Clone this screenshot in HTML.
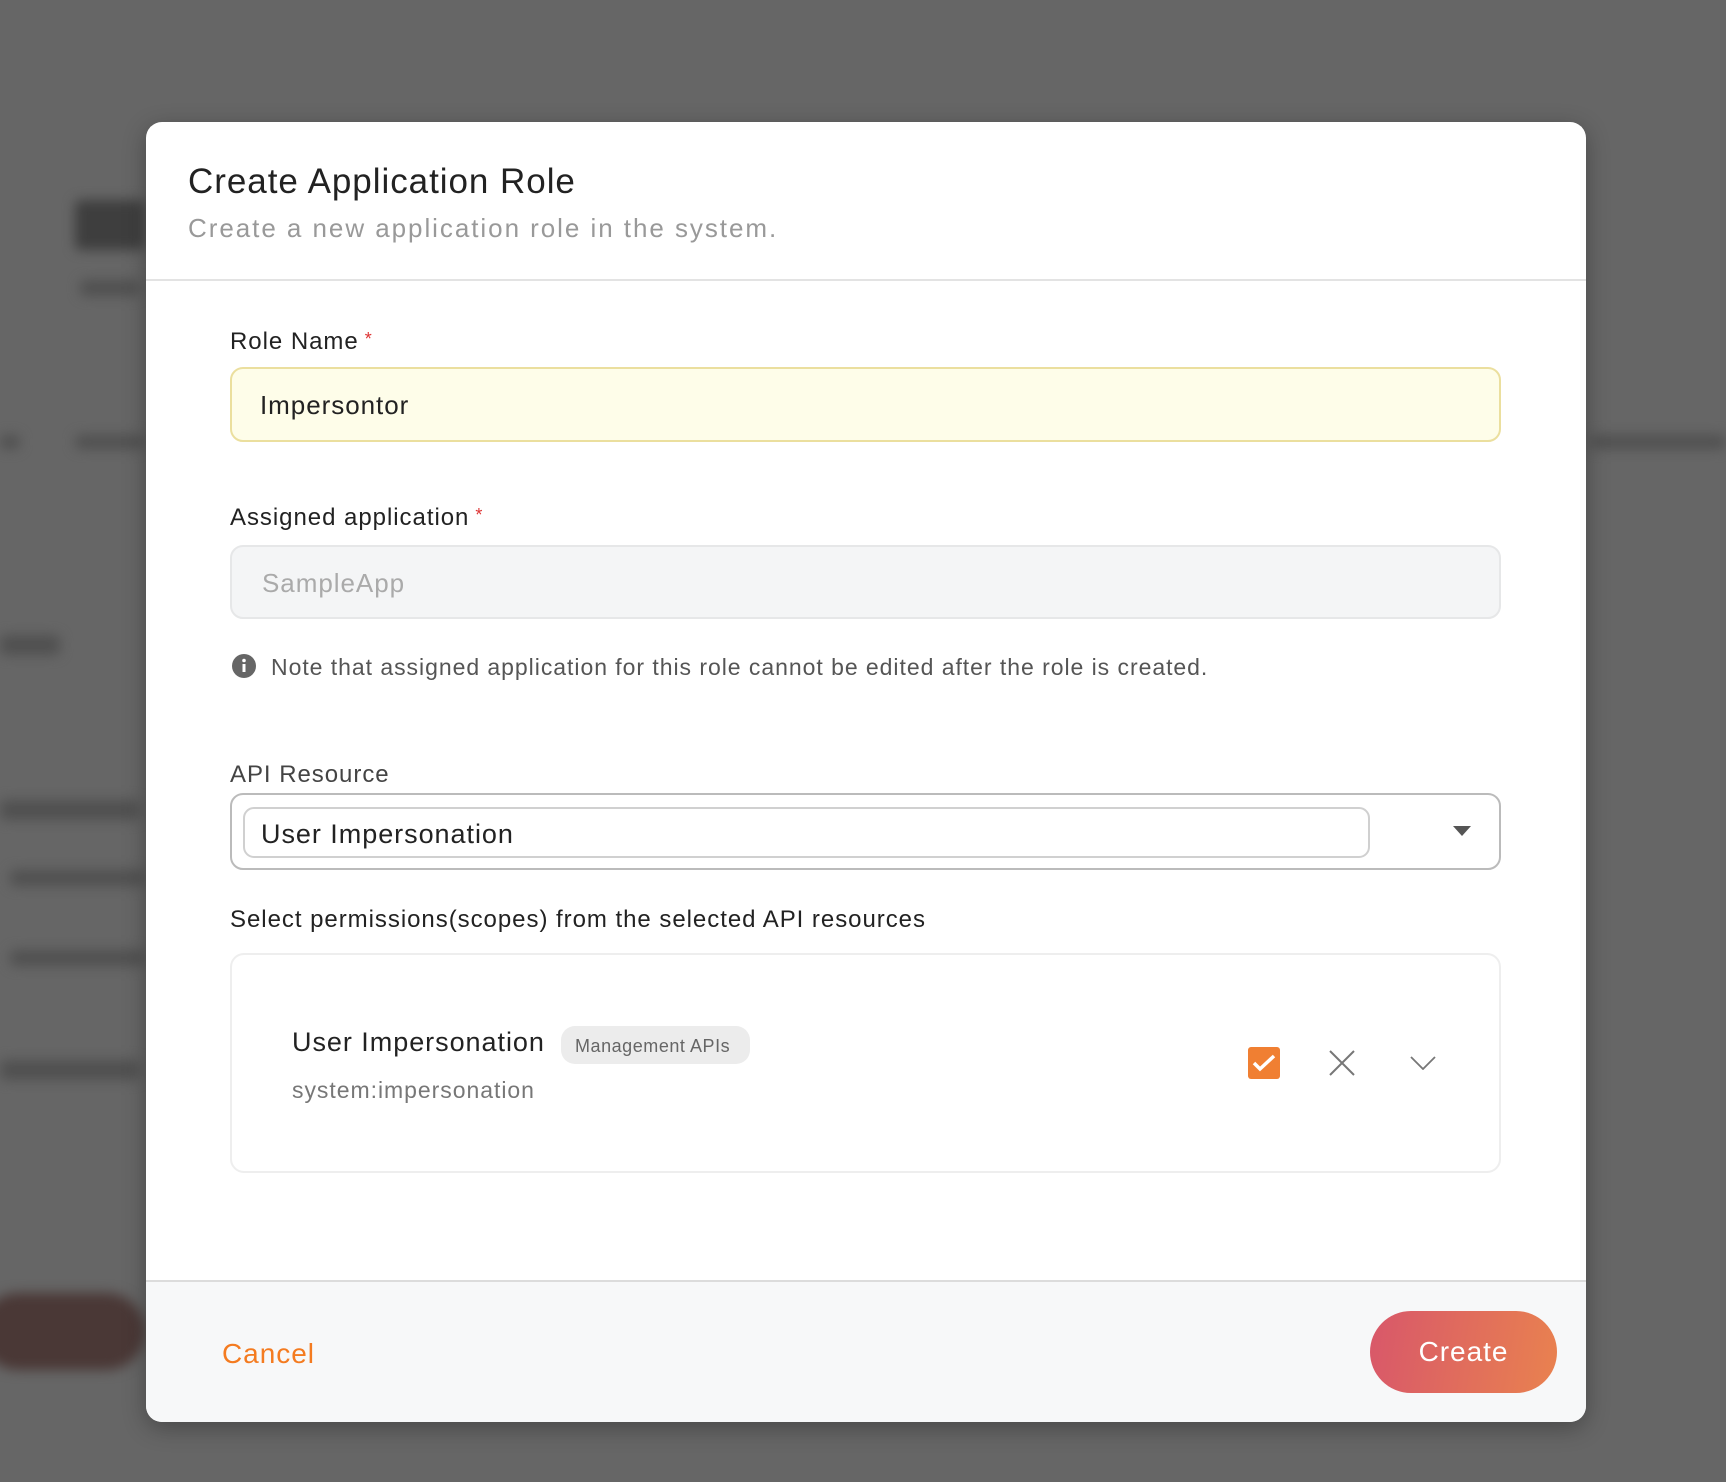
<!DOCTYPE html>
<html><head><meta charset="utf-8"><style>
*{box-sizing:border-box;margin:0;padding:0}
body{width:1726px;height:1482px;background:#666;position:relative;overflow:hidden;font-family:"Liberation Sans",sans-serif;color:#222;letter-spacing:0.06em}
.bg{position:absolute;filter:blur(6px);background:#505050;border-radius:6px}
.modal{position:absolute;left:146px;top:122px;width:1440px;height:1300px;background:#fff;border-radius:16px;overflow:hidden;box-shadow:0 6px 24px rgba(0,0,0,.3)}
.abs{position:absolute}
.lbl{position:absolute;left:84px;font-size:24px;color:#222;line-height:1}
.star{color:#d33;font-size:18px;vertical-align:top;margin-left:6px}
</style></head><body>
<div class="bg" style="left:75px;top:200px;width:70px;height:50px;background:#3e3e3e"></div>
<div class="bg" style="left:80px;top:280px;width:60px;height:16px"></div>
<div class="bg" style="left:0;top:435px;width:20px;height:14px"></div>
<div class="bg" style="left:75px;top:435px;width:70px;height:14px"></div>
<div class="bg" style="left:0;top:635px;width:60px;height:20px"></div>
<div class="bg" style="left:0;top:800px;width:140px;height:20px"></div>
<div class="bg" style="left:10px;top:870px;width:135px;height:16px"></div>
<div class="bg" style="left:10px;top:950px;width:135px;height:16px"></div>
<div class="bg" style="left:0;top:1060px;width:140px;height:20px"></div>
<div class="bg" style="left:1590px;top:435px;width:136px;height:14px"></div>
<div class="bg" style="left:-20px;top:1293px;width:165px;height:77px;border-radius:40px;background:#4a3836"></div>
<div class="modal">
 <div class="abs" style="left:42px;top:40px;font-size:35px;color:#222">Create Application Role</div>
 <div class="abs" style="left:42px;top:91px;font-size:26px;color:#999;letter-spacing:0.075em">Create a new application role in the system.</div>
 <div class="abs" style="left:0;top:157px;width:1440px;height:2px;background:#e3e3e3"></div>

 <div class="lbl" style="top:208px">Role Name<span class="star">*</span></div>
 <div class="abs" style="left:84px;top:245px;width:1271px;height:75px;background:#fefde9;border:2px solid #ebdf9e;border-radius:13px;font-size:26px;padding:21px 0 0 28px">Impersontor</div>

 <div class="lbl" style="top:384px">Assigned application<span class="star">*</span></div>
 <div class="abs" style="left:84px;top:423px;width:1271px;height:74px;background:#f4f5f6;border:2px solid #e6e7e8;border-radius:13px;font-size:26px;color:#aaa;padding:21px 0 0 30px">SampleApp</div>

 <svg class="abs" style="left:86px;top:532px" width="24" height="24" viewBox="0 0 24 24"><circle cx="12" cy="12" r="12" fill="#666"/><rect x="10.5" y="10" width="3" height="8" fill="#fff"/><circle cx="12" cy="6.5" r="1.8" fill="#fff"/></svg>
 <div class="abs" style="left:125px;top:532px;font-size:23px;color:#555">Note that assigned application for this role cannot be edited after the role is created.</div>

 <div class="lbl" style="top:641px;color:#444">API Resource</div>
 <div class="abs" style="left:84px;top:671px;width:1271px;height:77px;border:2px solid #bbb;border-radius:13px"></div>
 <div class="abs" style="left:97px;top:685px;width:1127px;height:51px;border:2px solid #d0d0d0;border-radius:11px;font-size:27px;padding:10px 0 0 16px">User Impersonation</div>
 <svg class="abs" style="left:1306px;top:703px" width="20" height="12" viewBox="0 0 20 12"><path d="M1 1h18L10 11z" fill="#555"/></svg>

 <div class="lbl" style="top:786px">Select permissions(scopes) from the selected API resources</div>
 <div class="abs" style="left:84px;top:831px;width:1271px;height:220px;border:2px solid #eee;border-radius:14px"></div>
 <div class="abs" style="left:146px;top:905px;font-size:27px;color:#222">User Impersonation</div>
 <div class="abs" style="left:415px;top:904px;width:189px;height:38px;background:#ececec;border-radius:14px;font-size:18px;color:#666;padding:10px 0 0 14px;letter-spacing:0.03em">Management APIs</div>
 <div class="abs" style="left:146px;top:955px;font-size:23px;color:#777">system:impersonation</div>
 <svg class="abs" style="left:1102px;top:925px" width="32" height="32" viewBox="0 0 32 32"><rect width="32" height="32" rx="3" fill="#f07f32"/><path d="M6 16l6 6L26 9" stroke="#fff" stroke-width="3.5" fill="none"/></svg>
 <svg class="abs" style="left:1183px;top:928px" width="26" height="26" viewBox="0 0 26 26"><path d="M1 1l24 24M25 1L1 25" stroke="#777" stroke-width="2" fill="none"/></svg>
 <svg class="abs" style="left:1264px;top:934px" width="26" height="14" viewBox="0 0 26 14"><path d="M1 1l12 12L25 1" stroke="#777" stroke-width="1.8" fill="none"/></svg>

 <div class="abs" style="left:0;top:1158px;width:1440px;height:142px;background:#f7f8f9;border-top:2px solid #dcdcdc"></div>
 <div class="abs" style="left:76px;top:1216px;font-size:28px;color:#f47b20">Cancel</div>
 <div class="abs" style="left:1224px;top:1189px;width:187px;height:82px;border-radius:41px;background:linear-gradient(100deg,#d8576a,#e9824f);color:#fff;font-size:28px;text-align:center;line-height:82px">Create</div>
</div>
</body></html>
